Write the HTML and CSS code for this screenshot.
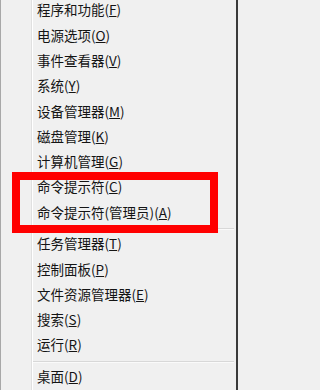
FILE: index.html
```html
<!DOCTYPE html>
<html lang="zh-CN">
<head>
<meta charset="utf-8">
<title>Win+X 菜单</title>
<link rel="stylesheet" href="styles.css">
</head>
<body>
<div class="frame">
  <div class="gutter"></div>
  <ul class="menu">
    <li class="item">程序和功能(<u>F</u>)</li>
    <li class="item">电源选项(<u>O</u>)</li>
    <li class="item">事件查看器(<u>V</u>)</li>
    <li class="item">系统(<u>Y</u>)</li>
    <li class="item">设备管理器(<u>M</u>)</li>
    <li class="item">磁盘管理(<u>K</u>)</li>
    <li class="item">计算机管理(<u>G</u>)</li>
    <li class="item">命令提示符(<u>C</u>)</li>
    <li class="item">命令提示符(管理员)(<u>A</u>)</li>
    <li class="sep"></li>
    <li class="item">任务管理器(<u>T</u>)</li>
    <li class="item">控制面板(<u>P</u>)</li>
    <li class="item">文件资源管理器(<u>E</u>)</li>
    <li class="item">搜索(<u>S</u>)</li>
    <li class="item">运行(<u>R</u>)</li>
    <li class="sep"></li>
    <li class="item">桌面(<u>D</u>)</li>
  </ul>
  <div class="highlight"></div>
</div>
</body>
</html>
```
FILE: styles.css
```css
html, body {
  margin: 0;
  padding: 0;
  background: #f0f0f0;
}
body {
  width: 238px;
  height: 390px;
  overflow: hidden;
  font-family: "Noto Sans CJK SC", "Noto Sans", sans-serif;
  font-size: 13.5px;
  color: #141414;
}
.frame {
  position: relative;
  display: flex;
  height: 390px;
  box-sizing: border-box;
  border-left: 1px solid #a8a8a8;
  border-right: 2px solid #3a3a3a;
  overflow: hidden;
}
.gutter {
  width: 30px;
  flex: none;
  border-right: 1px solid #e0e0e0;
}
.menu {
  flex: 1;
  list-style: none;
  margin: -2.7px 0 0 0;
  padding: 0;
  border-left: 1px solid #ffffff;
}
.item {
  height: 25.3px;
  line-height: 25.3px;
  padding-left: 4px;
  white-space: nowrap;
}
.item u {
  text-decoration-thickness: 1px;
  text-underline-offset: 1px;
}
.sep {
  height: 6.3px;
  box-sizing: border-box;
  padding-top: 3px;
  margin-right: 2px;
}
.sep::before {
  content: "";
  display: block;
  height: 1px;
  background: #d8d8d8;
  border-bottom: 1px solid #fafafa;
}
.highlight {
  position: absolute;
  left: 11px;
  top: 172px;
  width: 206px;
  height: 61px;
  box-sizing: border-box;
  border: 8px solid #ff0000;
}
```
